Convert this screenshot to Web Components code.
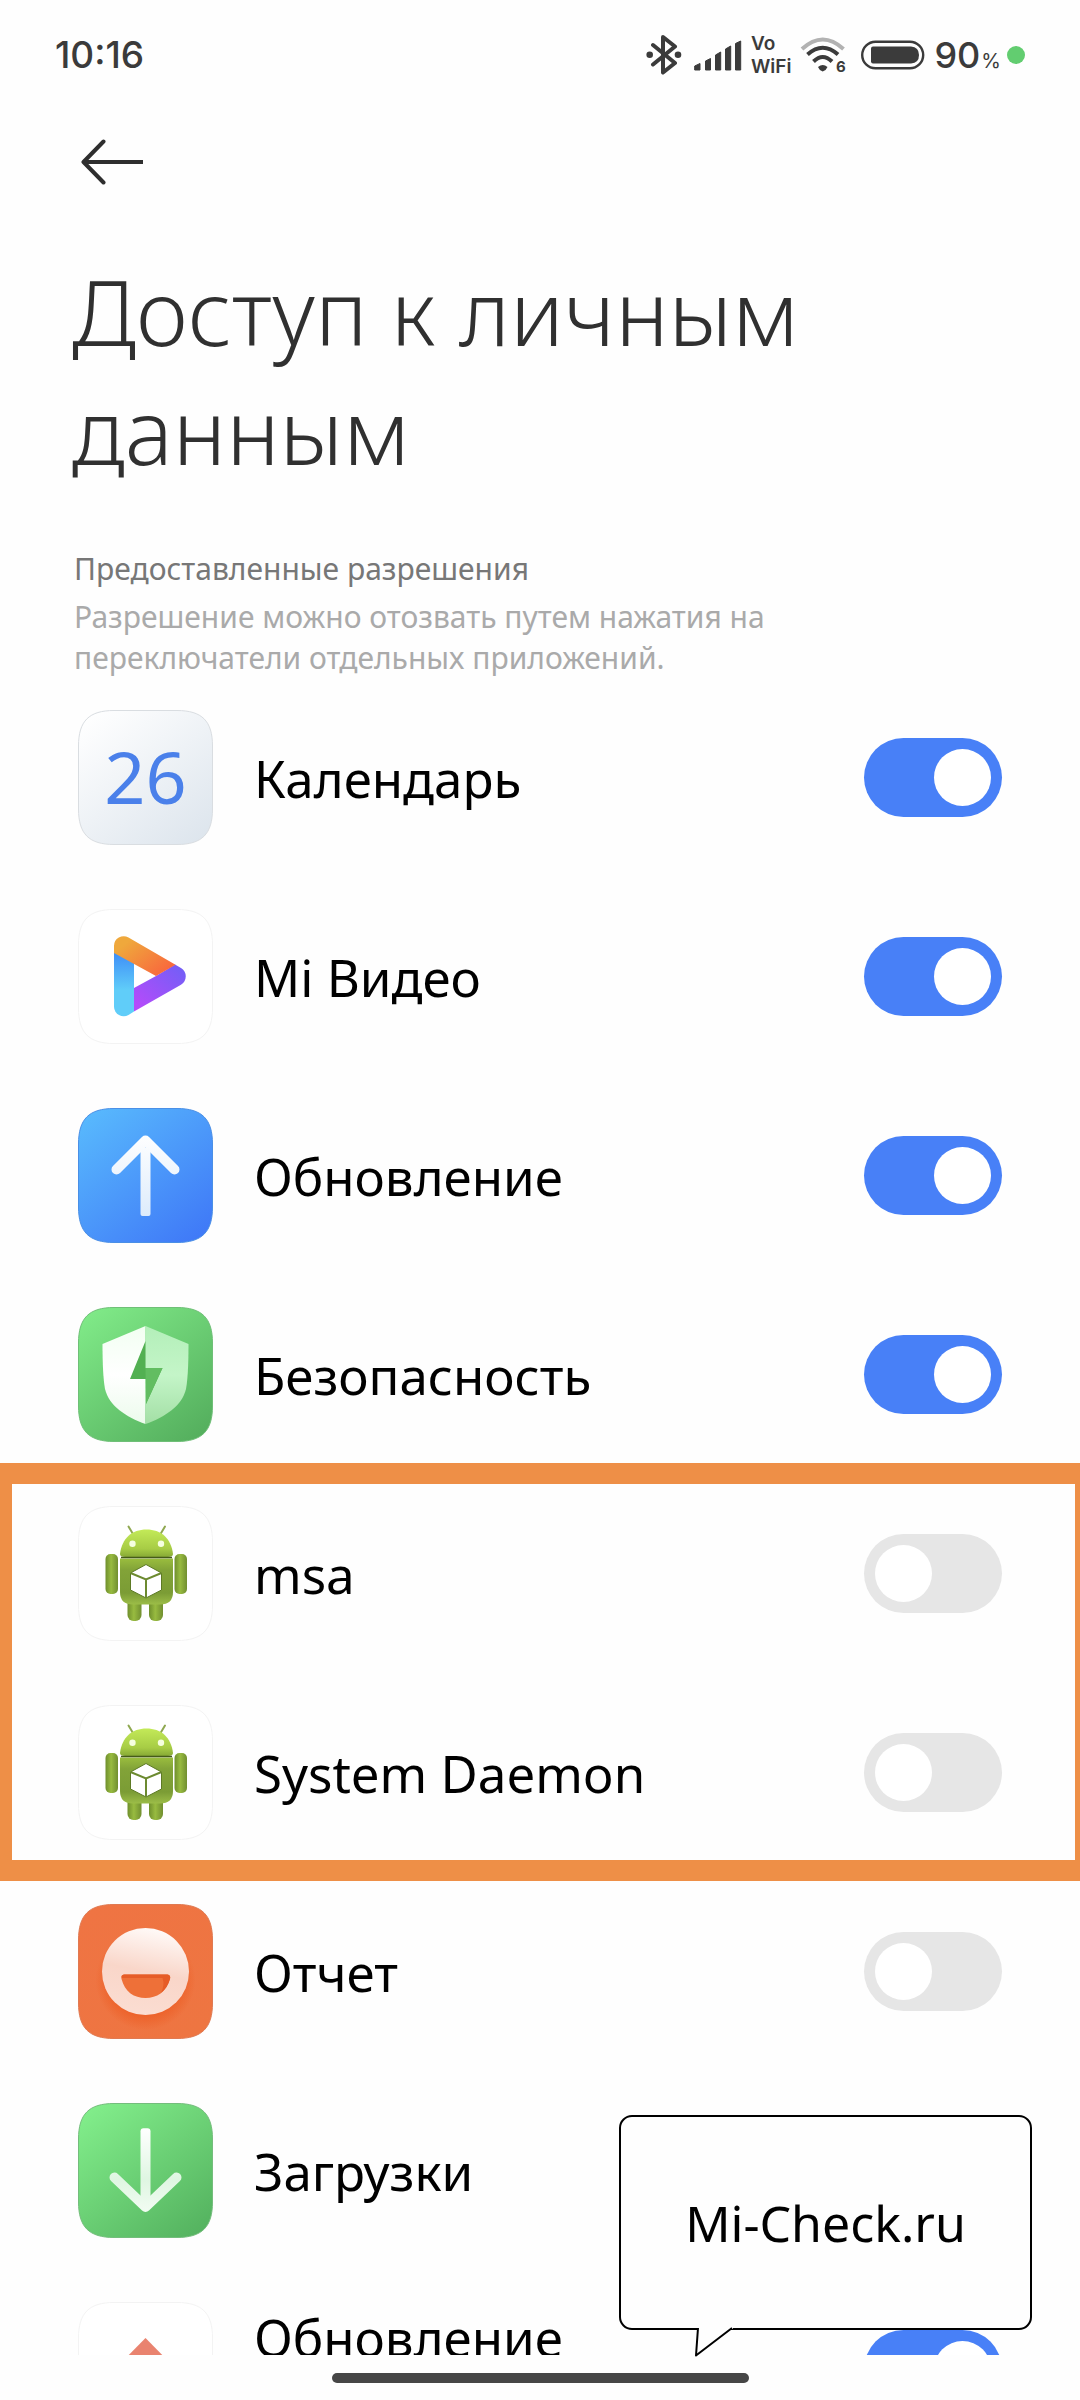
<!DOCTYPE html>
<html lang="ru">
<head>
<meta charset="utf-8">
<meta name="viewport" content="width=device-width, initial-scale=1">
<title>Доступ к личным данным</title>
<style>
  body { margin: 0; background: #fefefe; font-family: "Noto Sans", "Liberation Sans", sans-serif; color: #000; }
</style>
</head>
<body>
<privacy-screen>
  <status-bar slot="status" time="10:16" battery="90"></status-bar>
  <page-header slot="header">
    Доступ к личным данным
    <span slot="caption">Предоставленные разрешения</span>
    <span slot="note">Разрешение можно отозвать путем нажатия на переключатели отдельных приложений.</span>
  </page-header>
  <permission-row icon="calendar" checked>Календарь</permission-row>
  <permission-row icon="video" checked>Mi Видео</permission-row>
  <permission-row icon="update" checked>Обновление</permission-row>
  <permission-row icon="security" checked>Безопасность</permission-row>
  <highlight-frame>
    <permission-row icon="android">msa</permission-row>
    <permission-row icon="android">System Daemon</permission-row>
  </highlight-frame>
  <permission-row icon="report">Отчет</permission-row>
  <permission-row icon="download">Загрузки</permission-row>
  <permission-row icon="component" checked two-line>Обновление</permission-row>
  <speech-callout slot="callout">Mi-Check.ru</speech-callout>
</privacy-screen>

<script>
const define = (name, html, setup) => {
  const template = document.createElement('template');
  template.innerHTML = html;
  customElements.define(name, class extends HTMLElement {
    connectedCallback() {
      if (this.shadowRoot) return;
      const root = this.attachShadow({ mode: 'open' });
      root.append(template.content.cloneNode(true));
      if (setup) setup(this, root);
    }
  });
};

define('privacy-screen', `
  <style>
    :host { display: flex; flex-direction: column; height: 100vh; position: relative; }
    main { flex: 1; min-height: 0; overflow: hidden; }
    footer { display: flex; align-items: center; justify-content: center; height: 45px; flex: none; }
    .handle { width: 417px; height: 10px; border-radius: 5px; background: #464646; }
    ::slotted(speech-callout) { position: absolute; right: 48px; bottom: 70px; }
  </style>
  <slot name="status"></slot>
  <slot name="header"></slot>
  <main><slot></slot></main>
  <footer><div class="handle"></div></footer>
  <slot name="callout"></slot>
`);

define('status-bar', `
  <style>
    :host { display: flex; align-items: center; justify-content: space-between; flex: none; height: 110px;
      padding: 0 55px; color: #3b3b3b; font: 500 37px/44px Inter, "Noto Sans", sans-serif; }
    .icons, .level { display: flex; align-items: center; gap: 9px; }
    .level { gap: 6px; }
    .percent { display: flex; align-items: baseline; gap: 1px; font-size: 36px; }
    .percent small { font-size: 20px; line-height: 24px; font-weight: 400; }
    .net { font: 600 19px/23px Inter, sans-serif; }
    .net span { display: block; }
    .dot { width: 18px; height: 18px; border-radius: 50%; background: #62cd70; }
    svg { display: block; }
  </style>
  <span id="time"></span>
  <div class="icons">
    <svg width="40" height="40" viewBox="0 0 40 40" fill="none" stroke="#3b3b3b" stroke-width="4" stroke-linejoin="round" stroke-linecap="round">
      <path d="M8 10 30 28 18 37.500V2L30 11.500 8 29.500"/>
      <g fill="#3b3b3b" stroke="none"><circle cx="4.700" cy="19.700" r="3.300"/><circle cx="33" cy="19.700" r="3.300"/></g>
    </svg>
    <svg width="48" height="31" viewBox="0 0 48 31" fill="#3b3b3b" stroke="#3b3b3b" stroke-width="1" stroke-linejoin="round">
      <path d="M.7 26 6 23.500V30H.7zM11.500 21 16.500 18.500V30h-5zM21.500 15 26.700 12V30h-5.200zM31.500 9 36.700 6V30h-5.200zM41.500 3.500 46.700 1V30h-5.200z"/>
    </svg>
    <div class="net"><span>Vo</span><span>WiFi</span></div>
    <svg width="52" height="46" viewBox="0 -4 52 46" fill="none" stroke="#3b3b3b" stroke-width="4">
      <path stroke="#b2b2b2" d="M2 13Q22.700-6 43.500 13"/>
      <path d="M7.500 18.500Q22.700 5 38 18.500"/>
      <path d="M13.500 25.500Q22.700 16.500 32 25.500"/>
      <path fill="#3b3b3b" stroke="none" d="M18 31q4.700-4 9.500 0-1 3-4.800 4.500-3.700-1.500-4.700-4.500z"/>
      <text x="36" y="36" fill="#3b3b3b" stroke="none" font-family="Inter, sans-serif" font-size="15" font-weight="700">6</text>
    </svg>
    <svg width="64" height="30" viewBox="0 0 64 30" fill="none">
      <rect x="1.200" y="1.700" width="61" height="26.600" rx="13.300" stroke="#3b3b3b" stroke-width="2.400"/>
      <path fill="#3b3b3b" d="M12 6.500h38q8 .5 8 8.500t-8 8.500H12q-2 0-2-2v-13q0-2 2-2z"/>
    </svg>
    <div class="level">
      <span class="percent"><span id="battery"></span><small>%</small></span>
      <span class="dot"></span>
    </div>
  </div>
`, (host, root) => {
  root.getElementById('time').textContent = host.getAttribute('time');
  root.getElementById('battery').textContent = host.getAttribute('battery');
});

define('page-header', `
  <style>
    :host { display: block; flex: none; padding: 20px 72px 0; }
    button { display: grid; place-items: center; width: 80px; height: 64px; margin: 0 0 58px; padding: 0; border: 0; background: none; }
    h1 { margin: 0 0 58px; font-weight: 300; font-size: 90px; line-height: 119px; color: #303030; max-width: 760px; }
    p { margin: 0; padding-left: 2px; font-size: 30px; line-height: 41px; }
    .caption { margin-bottom: 7px; color: #777; }
    .note { color: #aaa; max-width: 760px; }
  </style>
  <button aria-label="Назад">
    <svg width="64" height="46" viewBox="0 0 64 46" fill="none" stroke="#2e2e2e" stroke-width="4" stroke-linejoin="round">
      <path d="M23.500 2.500 3.500 23l20 20.500" stroke-linecap="round"/><path d="M4 23h59"/>
    </svg>
  </button>
  <h1><slot></slot></h1>
  <p class="caption"><slot name="caption"></slot></p>
  <p class="note"><slot name="note"></slot></p>
`);

define('highlight-frame', `
  <style>
    :host { display: block; position: relative; }
    .frame { position: absolute; inset: -11px 0 -9px; border: 21px solid #ee8f47; border-width: 21px 5px 21px 12px; pointer-events: none; }
  </style>
  <slot></slot><div class="frame"></div>
`);

define('permission-row', `
  <style>
    :host { display: block; }
    label { display: flex; align-items: center; gap: 41px; height: 199px; padding: 0 78px; }
    .name { flex: 1; font-size: 51px; line-height: 66px; }
    :host([two-line]) .name { padding-bottom: 66px; }
    input { appearance: none; flex: none; display: flex; align-items: center; width: 138px; height: 79px; margin: 0;
      padding: 0 11px; box-sizing: border-box; border-radius: 40px; background: #e6e6e6; }
    input::before { content: ""; width: 57px; height: 57px; border-radius: 50%; background: #fff; }
    input:checked { background: #4880f7; justify-content: flex-end; }
  </style>
  <label>
    <app-icon></app-icon>
    <span class="name"><slot></slot></span>
    <input type="checkbox" role="switch">
  </label>
`, (host, root) => {
  root.querySelector('app-icon').setAttribute('name', host.getAttribute('icon'));
  root.querySelector('input').checked = host.hasAttribute('checked');
});

define('speech-callout', `
  <style>
    :host { display: grid; place-items: center; box-sizing: border-box; width: 413px; height: 215px;
      border: 2px solid #000; border-radius: 13px; background: #fefefe; font-size: 50px; line-height: 66px; }
    svg { position: absolute; left: 70px; top: 100%; margin-top: -1px; }
  </style>
  <span><slot></slot></span>
  <svg width="50" height="31" viewBox="0 0 50 31">
    <path d="M7 0H42V2H7z" fill="#fefefe"/>
    <path d="M7 1 5 28.500 41 1" fill="#fefefe" stroke="#000" stroke-width="2" stroke-linejoin="round"/>
  </svg>
`);

const squircle = 'M36 .5H99C124 .5 134.500 11 134.500 36V99C134.500 124 124 134.500 99 134.500H36C11 134.500.5 124 .5 99V36C.5 11 11 .5 36 .5Z';
const tile = (from, to, edge) => `
  <linearGradient id="tile" x1="0.1" y1="0" x2="0.9" y2="1"><stop stop-color="${from}"/><stop offset="1" stop-color="${to}"/></linearGradient>
  <path d="${squircle}" fill="url(#tile)" stroke="${edge}"/>`;
const white = tile('#fff', '#fff', '#f3f3f3');
const glyph = `<linearGradient id="glyph" gradientUnits="userSpaceOnUse" x1="0" y1="25" x2="0" y2="110"><stop stop-color="#fff"/><stop offset="1" stop-color="#dcebfb"/></linearGradient>`;

const icons = {
  calendar: tile('#ffffff', '#dde5ed', '#d9dde1') +
    `<text x="67.500" y="94" text-anchor="middle" font-family="Noto Sans, sans-serif" font-size="72" fill="#4a80ea">26</text>`,
  video: white + `
    <linearGradient id="o" x1="0" y1="0" x2="1" y2=".8"><stop offset=".2" stop-color="#efa83c"/><stop offset="1" stop-color="#f9643d"/></linearGradient>
    <linearGradient id="b" x1="0" y1="0" x2="0" y2="1"><stop stop-color="#3d8bf7"/><stop offset=".6" stop-color="#60cdf9"/></linearGradient>
    <linearGradient id="p" x1="0" y1="1" x2="1" y2="0"><stop offset=".1" stop-color="#b44bfa"/><stop offset="1" stop-color="#6e60f6"/></linearGradient>
    <path fill="url(#b)" d="M36 42 56 53V102.500L50.500 106A9.700 9.700 0 0 1 36 98z"/>
    <path fill="url(#p)" d="M97 55.500 103 59A9.700 9.700 0 0 1 103 75.700L56 102.500V79L78 67z"/>
    <path fill="url(#o)" d="M36 44V37A9.700 9.700 0 0 1 50.500 28.500L97.500 55.700 78 67z"/>`,
  update: tile('#58b9fd', '#3f78f7', '#4a8fe6') + glyph + `
    <g fill="none" stroke="url(#glyph)" stroke-width="10"><path stroke-linecap="round" stroke-linejoin="round" d="M38.500 61.500 67.500 32.500l29 29"/></g>
    <rect x="62.500" y="40" width="10" height="68" rx="2" fill="url(#glyph)"/>`,
  security: tile('#80ea88', '#54ae5d', '#6fbf77') + `
    <linearGradient id="l" x1="0" y1="0" x2="0" y2="1"><stop stop-color="#f2fff2"/><stop offset=".5" stop-color="#fff"/><stop offset="1" stop-color="#ecfbec"/></linearGradient>
    <linearGradient id="r" x1="0" y1="0" x2="0" y2="1"><stop stop-color="#b3efb9"/><stop offset=".5" stop-color="#c4f5c8"/><stop offset="1" stop-color="#a3dfa5"/></linearGradient>
    <path fill="url(#l)" d="M67.500 19 24.500 37Q24.500 68 27 82C31 99 48 110 67.500 117z"/>
    <path fill="url(#r)" d="M67.500 19 110.500 37Q110.500 68 108 82C104 99 87 110 67.500 117z"/>
    <path fill="#52b052" d="M67.500 34 52 72H68V97L84.500 61H67.500z"/>
    <path fill="#62bd61" d="M67.500 61H84.500L68 97z"/>`,
  android: white + `
    <linearGradient id="h" x1="0" y1="0" x2="0" y2="1"><stop stop-color="#c3ea58"/><stop offset=".7" stop-color="#a7cc45"/><stop offset="1" stop-color="#87a935"/></linearGradient>
    <linearGradient id="g" x1="0" y1="0" x2="0" y2="1"><stop stop-color="#9abd3e"/><stop offset=".25" stop-color="#82a338"/><stop offset=".75" stop-color="#7b9c35"/><stop offset="1" stop-color="#9cbd48"/></linearGradient>
    <linearGradient id="a" x1="0" y1="0" x2="1" y2="0"><stop stop-color="#6f8f2d"/><stop offset=".45" stop-color="#98bb40"/><stop offset="1" stop-color="#718f30"/></linearGradient>
    <path d="M50.500 20.500 55 28M87 20.500 82.500 28" stroke="#8fa850" stroke-width="2" stroke-linecap="round"/>
    <rect x="49.500" y="92" width="14" height="23" rx="6" fill="url(#a)"/><rect x="71" y="92" width="14" height="23" rx="6" fill="url(#a)"/>
    <rect x="27.500" y="48" width="12.500" height="40" rx="5" fill="url(#a)"/><rect x="96.500" y="48" width="12.500" height="40" rx="5" fill="url(#a)"/>
    <path d="M42 52.500H95V86Q95 98.500 82 98.500H55Q42 98.500 42 86z" fill="url(#g)"/>
    <path d="M42 48C44 32 54 23.500 68.500 23.500S93 32 95 48Q95 51 90 51H47Q42 51 42 48z" fill="url(#h)"/>
    <path d="M43 51.500h51" stroke="#455a1a" stroke-width="1.500"/>
    <circle cx="54.500" cy="37.700" r="3.200" fill="#f6ffe0"/><circle cx="83" cy="37.700" r="3.200" fill="#f6ffe0"/>
    <path d="M68 58.500 83.500 67V84L68 92 52.500 84V67z" fill="#fff" stroke="#5d7a25" stroke-width="1"/>
    <path d="M52.500 67 68 73.500 83.500 67M68 73.500V92" fill="none" stroke="#6c8a30" stroke-width="2"/>`,
  report: tile('#ef7443', '#ee7541', '#e07a52') + `
    <linearGradient id="f" x1=".6" y1="0" x2=".4" y2="1"><stop stop-color="#fffaf8"/><stop offset=".5" stop-color="#f9d6c9"/><stop offset="1" stop-color="#fbddd2"/></linearGradient>
    <radialGradient id="s"><stop offset=".7" stop-color="#ec5a20"/><stop offset="1" stop-color="#ec5a20" stop-opacity="0"/></radialGradient>
    <circle cx="67.500" cy="76" r="50" fill="url(#s)" opacity=".7"/>
    <circle cx="67.500" cy="67.500" r="43.500" fill="url(#f)"/>
    <path d="M46 70.500H89.500Q93 71 92 75C88 88 79 94 67.500 94S47 88 43.500 75Q42.500 71 46 70.500z" fill="#ee7038"/>
    <path d="M46 70.500H89.500Q93 71 92 75 89.500 84 83 89 87 81 84.500 74H44Q42.500 71 46 70.500z" fill="#e65c27"/>`,
  download: tile('#82ee8b', '#54b25f', '#74bd7c') + `
    <linearGradient id="d" gradientUnits="userSpaceOnUse" x1="0" y1="25" x2="0" y2="110"><stop stop-color="#fff"/><stop offset=".6" stop-color="#dff6e2"/><stop offset="1" stop-color="#f2fcf3"/></linearGradient>
    <path fill="none" stroke="url(#d)" stroke-width="10" stroke-linecap="round" stroke-linejoin="round" d="M36.500 74.500 67.500 104l31-29.500"/>
    <rect x="62.500" y="25.300" width="10" height="76" rx="3" fill="url(#d)"/>`,
  component: white + `<path d="M67.500 36 99 68 67.500 100 36 68z" fill="#e9836f"/>`
};

customElements.define('app-icon', class extends HTMLElement {
  static observedAttributes = ['name'];
  attributeChangedCallback(_, __, name) {
    const root = this.shadowRoot || this.attachShadow({ mode: 'open' });
    root.innerHTML = `<style>:host { display: block; flex: none; width: 135px; height: 135px; } svg { display: block; }</style>
      <svg width="135" height="135" viewBox="0 0 135 135" aria-hidden="true">${icons[name] || ''}</svg>`;
  }
});
</script>
</body>
</html>
